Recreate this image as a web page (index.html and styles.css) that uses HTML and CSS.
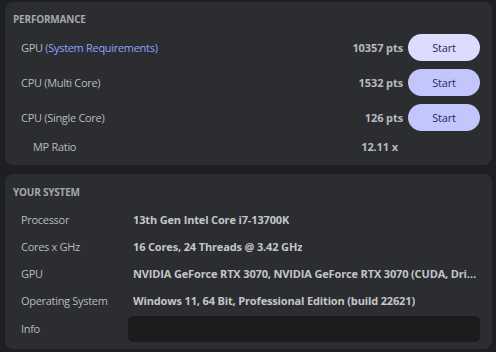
FILE: index.html
```html
<!DOCTYPE html>
<html lang="en">
<head>
  <meta charset="UTF-8" />
  <meta name="viewport" content="width=device-width, initial-scale=1" />
  <title>Performance</title>
  <link rel="stylesheet" href="styles.css">
</head>
<body>

<div class="panel perf">
  <h3>PERFORMANCE</h3>

  <div class="bench">
    <span class="name">GPU <span class="link">(System Requirements)</span></span>
    <span class="score">10357 pts</span>
    <button class="btn-start hover">Start</button>
  </div>

  <div class="bench">
    <span class="name">CPU (Multi Core)</span>
    <span class="score">1532 pts</span>
    <button class="btn-start">Start</button>
  </div>

  <div class="bench">
    <span class="name">CPU (Single Core)</span>
    <span class="score">126 pts</span>
    <button class="btn-start">Start</button>
  </div>

  <div class="bench ratio">
    <span class="name">MP Ratio</span>
    <span class="score">12.11 x</span>
  </div>
</div>

<div class="panel system">
  <h3>YOUR SYSTEM</h3>

  <div class="info-row">
    <span class="label">Processor</span>
    <span class="value">13th Gen Intel Core i7-13700K</span>
  </div>
  <div class="info-row">
    <span class="label">Cores x GHz</span>
    <span class="value">16 Cores, 24 Threads @ 3.42 GHz</span>
  </div>
  <div class="info-row">
    <span class="label">GPU</span>
    <span class="value">NVIDIA GeForce RTX 3070, NVIDIA GeForce RTX 3070 (CUDA, Driver 31.0.15.3623)</span>
  </div>
  <div class="info-row">
    <span class="label">Operating System</span>
    <span class="value">Windows 11, 64 Bit, Professional Edition (build 22621)</span>
  </div>
  <div class="info-row info">
    <span class="label">Info</span>
    <div class="info-box"></div>
  </div>
</div>

</body>
</html>
```

FILE: styles.css
```css
body {
  margin: 0;
  padding: 2px 4px 2px 5px;
  background: #1e1f22;
  font-family: "Open Sans", "Noto Sans", sans-serif;
  font-size: 11px;
  letter-spacing: -0.3px;
  color: #b9bbbe;
}

.panel {
  background: #2b2d31;
  border-radius: 8px;
  padding: 9px 12px 0 8px;
}

.perf {
  height: 154px;
}

.system {
  margin-top: 9px;
  height: 165px;
  padding-top: 10px;
}

h3 {
  margin: 0;
  font-size: 10px;
  font-weight: 700;
  color: #a4a7ad;
  letter-spacing: -0.2px;
  height: 18px;
  line-height: 16px;
}

.bench {
  display: flex;
  align-items: center;
  height: 27px;
  margin-top: 8px;
  padding-left: 8px;
}

.bench:first-of-type {
  margin-top: 5px;
}

.name {
  flex: 1;
}

.link {
  color: #8fa2ff;
}

.score {
  font-weight: 700;
  letter-spacing: -0.1px;
  color: #b9bbbe;
  margin-right: 5px;
}

.btn-start {
  width: 72px;
  height: 27px;
  border: none;
  border-radius: 14px;
  background: #c3c6fd;
  color: #1f2b63;
  font-family: inherit;
  font-size: 11px;
  letter-spacing: -0.2px;
  cursor: pointer;
}

.btn-start.hover {
  background: #dcdcfe;
}

.ratio {
  height: 16px;
  margin-top: 7px;
  padding-left: 20px;
  padding-right: 77px;
}

.info-row {
  display: flex;
  align-items: center;
  height: 27px;
  padding-left: 8px;
}

.info-row:first-of-type {
  margin-top: 4px;
}

.label {
  width: 112px;
  flex-shrink: 0;
}

.value {
  font-weight: 700;
  letter-spacing: -0.15px;
  color: #c4c6c9;
  white-space: nowrap;
  overflow: hidden;
  text-overflow: ellipsis;
}

.info {
  margin-top: 1px;
}

.info-box {
  flex: 1;
  margin-left: -5px;
  height: 26px;
  background: #1c1c1e;
  border-radius: 5px;
}
```
